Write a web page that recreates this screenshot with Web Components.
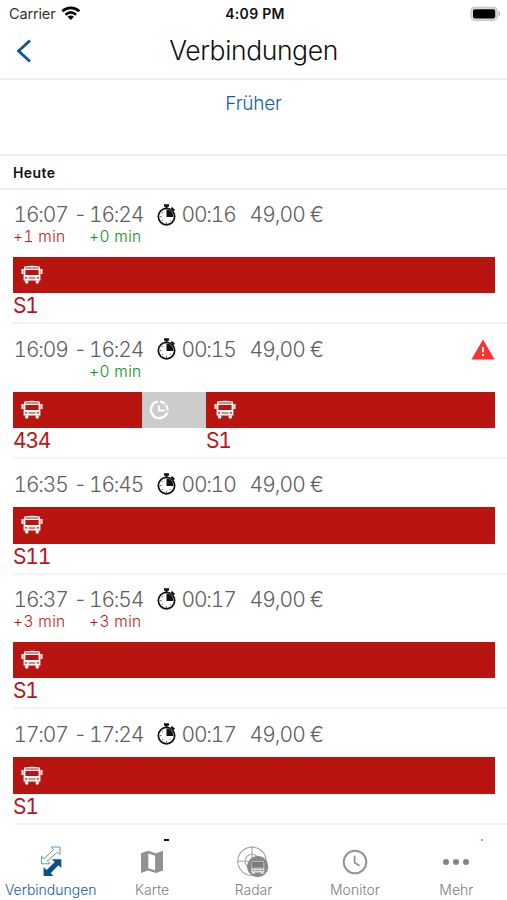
<!DOCTYPE html>
<html lang="de">
<head>
<meta charset="UTF-8">
<meta name="viewport" content="width=device-width, initial-scale=1">
<title>Verbindungen</title>
<style>
    body {
        margin: 0;
        background: #fff;
        font-family: Inter, "Liberation Sans", sans-serif;
    }
</style>
</head>
<body>
<trip-app></trip-app>

<script>
const icons = {
    wifi: `<svg width="20" height="15" viewBox="0 0 20 15" fill="none" stroke="#000" stroke-width="2.6"><path d="M1.3 5.2C6.3.7 13.3.7 18.3 5.2M4.5 8.7c3.4-2.9 7.2-2.9 10.6 0"/><path d="M9.8 14L6.6 10.8c2-1.6 4.4-1.6 6.4 0z" fill="#000" stroke="none"/></svg>`,
    battery: `<svg width="31" height="16" viewBox="0 0 31 16"><rect x=".9" y="1.2" width="26.4" height="13.2" rx="3.8" fill="#dcdcdc" stroke="#c0c0c0"/><rect x="3" y="3.2" width="22.2" height="9.2" rx="1.8" fill="#000"/><path d="M28.6 5.3c2 .8 2 4.2 0 5z" fill="#aaa"/></svg>`,
    back: `<svg width="16" height="24" viewBox="0 0 16 24" fill="none" stroke="#0b568f" stroke-width="2.8"><path d="M14 1.5L2.6 12 14 22.5"/></svg>`,
    stopwatch: `<svg width="20" height="22" viewBox="0 0 20 22"><circle cx="9.5" cy="12.6" r="8.2" fill="#fff" stroke="#111" stroke-width="1.7"/><path d="M7 .3h5v2.5H7zM8.5 2h2v3h-2zM15 3l3 2.7-1.3 1.5-3-2.7z" fill="#111"/><path d="M9.5 12.9V5.6a7 7 0 0 1 7 7.3z" fill="#111"/><path d="M9.5 17.8v1.8M2.8 12.6h1.8M4.9 17.2l1-1M14.1 17.2l-1-1M4.9 8l1 1" stroke="#444" stroke-width=".8"/></svg>`,
    bus: `<svg width="22" height="20" viewBox="0 0 22 20"><path d="M3.4 1.6Q11-.2 18.6 1.6l.8 2.9v11H2.6v-11z" fill="#fff"/><path d="M4.6 2.6h12.8l.4 1H4.2zM4.4 5h13.2v5H4.4z" fill="#b81410"/><path d="M.4 4h2.2v5H.4zM19.4 4h2.2v5h-2.2z" fill="#ffe0d8"/><path d="M4 12.2h2.2v1.4H4zM15.8 12.2H18v1.4h-2.2zM7.5 12.4h7v1h-7z" fill="#b81410"/><path d="M3.6 15.5h4l-.6 3H4.6zM14.4 15.5h4l-1 3H15z" fill="#fff"/></svg>`,
    wait: `<svg width="21" height="20" viewBox="0 0 21 20" fill="none" stroke="#fff" stroke-width="2.4"><path d="M8.8 1.5a8.4 8.4 0 1 0 9.4 11.2M11.3 1.5a8.4 8.4 0 0 1 4.8 2.5M17.1 5.2a8.4 8.4 0 0 1 1.3 5.4"/><path d="M10 5.4v5h5.5" stroke-width="2"/></svg>`,
    alert: `<svg width="24" height="21" viewBox="0 0 24 21"><path d="M12 .4L23.6 20.4H.4z" fill="#f93232"/><path d="M11 8h2v5.3h-2zM11 15h2v2h-2z" fill="#fff"/></svg>`,
    routes: `<svg width="24" height="32" viewBox="0 0 24 32"><path d="M12.3 1H21v7.7l-2.6-2.6L8.3 15l2.8 2.8H2.4v-7.7L5 12.7l9.8-9z" fill="#fff" stroke="#5b98c4" stroke-width="1"/><path d="M12.9 13.3h9.4v8.8l-2.9-2.8-7.7 7.9 2.8 2.9H4.6v-9.2l3 3 8.2-7.8z" fill="#08508b"/></svg>`,
    map: `<svg width="24" height="24" viewBox="0 0 24 24"><path d="M1 3.3L8 .8l8 2.4L23 .8v19.8l-7 2.4-8-2.4-7 2.4z" fill="#929292"/><path d="M8.3 3.5l6.8 2.2v14.5l-6.8-2z" fill="#fff"/></svg>`,
    radar: `<svg width="32" height="32" viewBox="0 0 32 32"><g fill="none" stroke="#a6a6a6" stroke-width="1.1"><circle cx="15" cy="15.3" r="14.2"/><circle cx="15" cy="15.3" r="7"/><path d="M15 0v12M0 15.3h11M25 15.3h5M15 24v6"/></g><circle cx="20.7" cy="20.6" r="10.6" fill="#898989"/><path d="M15 15h11.5l.8 2v5.5H14.2V17z" fill="#b4b4b4"/><path d="M15.2 16h11v5.6h-11z" fill="#7c7c7c"/><path d="M14.2 22.5h13.1v4H14.2z" fill="#ddd"/><path d="M15.5 24h2v1h-2zM24 24h2v1h-2zM18.5 24h4.5v.8h-4.5z" fill="#888"/><path d="M15 26h3v1.8h-3zM23.7 26h3v1.8h-3z" fill="#ddd"/></svg>`,
    clock: `<svg width="26" height="26" viewBox="0 0 26 26" fill="none" stroke="#929292"><circle cx="13" cy="13" r="11.3" stroke-width="2"/><path d="M12.6 6.7v7l5 3" stroke-width="1.7"/></svg>`,
    more: `<svg width="28" height="8" viewBox="0 0 28 8" fill="#858585"><circle cx="4" cy="4" r="3"/><circle cx="14" cy="4" r="3"/><circle cx="24" cy="4" r="3"/></svg>`
};

const trips = [
    { from: '16:07', to: '16:24', time: '00:16', late: ['+1 min', '+0 min'], legs: [['S1', 1]] },
    { from: '16:09', to: '16:24', time: '00:15', late: ['', '+0 min'], alert: true, legs: [['434', 128.5], ['', 64.5], ['S1', 288.5]] },
    { from: '16:35', to: '16:45', time: '00:10', legs: [['S11', 1]] },
    { from: '16:37', to: '16:54', time: '00:17', late: ['+3 min', '+3 min'], legs: [['S1', 1]] },
    { from: '17:07', to: '17:24', time: '00:17', legs: [['S1', 1]] }
];

class AppIcon extends HTMLElement {
    connectedCallback() {
        this.attachShadow({ mode: 'open' });
        this.shadowRoot.innerHTML = `
            <style>
                :host { display: inline-flex; flex: none; }
                svg { display: block; }
            </style>
            ${icons[this.getAttribute('name')]}
        `;
    }
}
customElements.define('app-icon', AppIcon);

class StatusBar extends HTMLElement {
    connectedCallback() {
        this.attachShadow({ mode: 'open' });
        this.shadowRoot.innerHTML = `
            <style>
                :host {
                    display: grid;
                    grid-template-columns: 1fr auto 1fr;
                    align-items: center;
                    height: 27px;
                    padding: 0 6px 0 9px;
                    font-size: 14.5px;
                    letter-spacing: -0.15px;
                    color: #333;
                }
                .carrier { display: flex; align-items: center; gap: 6px; }
                .time { font-weight: 600; font-size: 14px; letter-spacing: 0.3px; color: #111; }
                .battery { justify-self: end; }
            </style>
            <div class="carrier"><span>Carrier</span><app-icon name="wifi"></app-icon></div>
            <div class="time">4:09 PM</div>
            <app-icon class="battery" name="battery"></app-icon>
        `;
    }
}
customElements.define('status-bar', StatusBar);

class NavHeader extends HTMLElement {
    connectedCallback() {
        this.attachShadow({ mode: 'open' });
        this.shadowRoot.innerHTML = `
            <style>
                :host {
                    display: grid;
                    grid-template-columns: 1fr auto 1fr;
                    align-items: center;
                    box-sizing: border-box;
                    height: 53px;
                    padding: 0 16px 3px;
                    border-bottom: 2px solid #efefef;
                }
                h1 {
                    margin: 0 0 2px;
                    font-size: 26.5px;
                    font-weight: 300;
                    line-height: 32px;
                    letter-spacing: -0.4px;
                    color: #111;
                }
            </style>
            <app-icon name="back"></app-icon>
            <h1><slot></slot></h1>
        `;
    }
}
customElements.define('nav-header', NavHeader);

class TripItem extends HTMLElement {
    constructor() {
        super();
        this.attachShadow({ mode: 'open' });
    }

    set trip(trip) {
        const late = trip.late || [];
        this.shadowRoot.innerHTML = `
            <style>
                :host {
                    display: block;
                    box-sizing: border-box;
                    height: ${trip.late ? 134.8 : 115.4}px;
                    padding: 12px 12.5px 0 13px;
                    font-variant-numeric: tabular-nums;
                }
                .summary {
                    display: grid;
                    grid-template-columns: 60px 15.5px 67.5px 25px 68px 1fr auto;
                    align-items: center;
                    height: 25px;
                    padding-left: 0.5px;
                    font-size: 21px;
                    font-weight: 300;
                    letter-spacing: -1.15px;
                    white-space: nowrap;
                    color: #606060;
                }
                .price { letter-spacing: -0.9px; }
                .late {
                    display: grid;
                    grid-template-columns: 76px 1fr;
                    height: 19.4px;
                    font-size: 15.5px;
                    line-height: 20px;
                    font-weight: 300;
                    letter-spacing: 0.35px;
                    color: #c01820;
                }
                .late .ok { color: #0b910f; }
                .legs {
                    display: grid;
                    grid-template-columns: ${trip.legs.map(leg => leg[1] + 'fr').join(' ')};
                    padding-top: 10.5px;
                }
                .bar {
                    display: flex;
                    align-items: center;
                    height: 36.5px;
                    padding-left: 7.5px;
                    background: #b81410;
                }
                .bar.wait { padding-left: 7px; background: #ccc; }
                .line {
                    height: 30px;
                    font-size: 21px;
                    line-height: 26px;
                    letter-spacing: -1.2px;
                    color: #b91519;
                }
                .rule { height: 2px; margin: -1px -13px 0 0; background: #f3f3f3; }
            </style>
            <div class="summary">
                <span>${trip.from}</span><span>-</span><span>${trip.to}</span>
                <app-icon name="stopwatch"></app-icon>
                <span>${trip.time}</span><span class="price">49,00 €</span>
                ${trip.alert ? '<app-icon name="alert"></app-icon>' : ''}
            </div>
            ${trip.late ? `<div class="late">${late.map(text => `<span class="${text === '+0 min' ? 'ok' : ''}">${text}</span>`).join('')}</div>` : ''}
            <div class="legs">
                ${trip.legs.map(([line]) => `
                    <div>
                        <div class="bar ${line ? '' : 'wait'}"><app-icon name="${line ? 'bus' : 'wait'}"></app-icon></div>
                        <div class="line">${line}</div>
                    </div>`).join('')}
            </div>
            <div class="rule"></div>
        `;
    }
}
customElements.define('trip-item', TripItem);

class TabItem extends HTMLElement {
    connectedCallback() {
        this.attachShadow({ mode: 'open' });
        this.shadowRoot.innerHTML = `
            <style>
                :host {
                    display: flex;
                    flex-direction: column;
                    align-items: center;
                    color: #808080;
                    font-size: 14px;
                    font-weight: 300;
                    line-height: 20px;
                }
                :host([active]) { color: #125f9c; }
                .icon { display: flex; align-items: center; height: 36px; }
            </style>
            <div class="icon"><app-icon name="${this.getAttribute('icon')}"></app-icon></div>
            <div class="label"><slot></slot></div>
        `;
    }
}
customElements.define('tab-item', TabItem);

class TripApp extends HTMLElement {
    connectedCallback() {
        this.attachShadow({ mode: 'open' });
        this.shadowRoot.innerHTML = `
            <style>
                :host {
                    display: flex;
                    flex-direction: column;
                    height: 900px;
                    overflow: hidden;
                }
                .earlier {
                    box-sizing: border-box;
                    height: 76px;
                    padding-top: 12px;
                    border-bottom: 2px solid #efefef;
                    text-align: center;
                    font-size: 19px;
                    font-weight: 300;
                    line-height: 24px;
                    letter-spacing: -0.2px;
                    color: #125f9c;
                }
                .day {
                    box-sizing: border-box;
                    height: 34px;
                    padding-left: 13px;
                    border-bottom: 2px solid #efefef;
                    font-size: 14px;
                    font-weight: 600;
                    line-height: 33px;
                    letter-spacing: 0.4px;
                    color: #111;
                }
                main { flex: 1; min-height: 0; overflow: hidden; }
                /* top edge of the next row, cut off by the tab bar */
                .peek {
                    display: flex;
                    justify-content: space-between;
                    padding: 13.5px 24px 0 164px;
                }
                .peek i { width: 5px; height: 2px; background: #111; }
                .peek i + i { width: 2px; background: #fa8080; }
                nav {
                    display: grid;
                    grid-template-columns: repeat(5, 1fr);
                    height: 56px;
                }
            </style>
            <status-bar></status-bar>
            <nav-header>Verbindungen</nav-header>
            <div class="earlier">Früher</div>
            <div class="day">Heute</div>
            <main>
                <div class="list"></div>
                <div class="peek"><i></i><i></i></div>
            </main>
            <nav>
                <tab-item icon="routes" active>Verbindungen</tab-item>
                <tab-item icon="map">Karte</tab-item>
                <tab-item icon="radar">Radar</tab-item>
                <tab-item icon="clock">Monitor</tab-item>
                <tab-item icon="more">Mehr</tab-item>
            </nav>
        `;
        const list = this.shadowRoot.querySelector('.list');
        trips.forEach(trip => {
            const item = document.createElement('trip-item');
            item.trip = trip;
            list.appendChild(item);
        });
    }
}
customElements.define('trip-app', TripApp);
</script>
</body>
</html>
